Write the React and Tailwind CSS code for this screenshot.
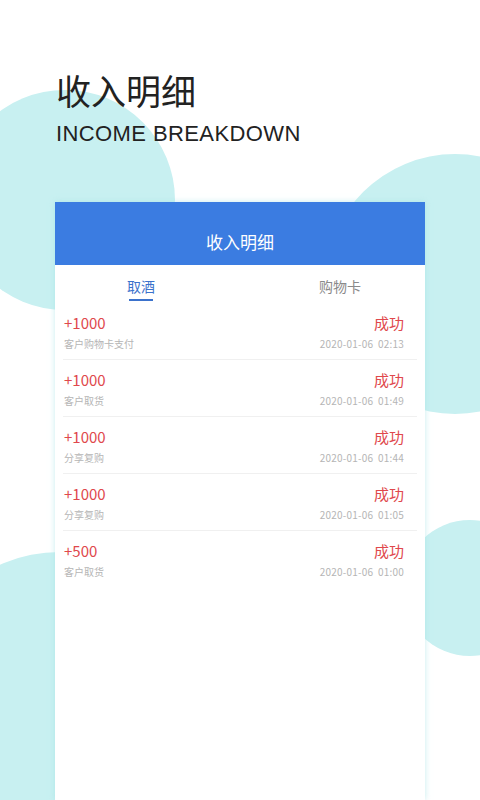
import React from 'react';

const records = [
    { amount: '+1000', note: '客户购物卡支付', time: '2020-01-06  02:13' },
    { amount: '+1000', note: '客户取货', time: '2020-01-06  01:49' },
    { amount: '+1000', note: '分享复购', time: '2020-01-06  01:44' },
    { amount: '+1000', note: '分享复购', time: '2020-01-06  01:05' },
    { amount: '+500', note: '客户取货', time: '2020-01-06  01:00' },
];

const cjk = { fontFamily: '"Noto Sans CJK SC", "Noto Sans", sans-serif' };

export default function App() {
    return (
        <div className="relative h-[800px] w-[480px] overflow-hidden bg-white" style={cjk}>
            {/* background blobs */}
            <div className="absolute left-[-45px] top-[90px] w-[220px] h-[220px] rounded-full bg-[#c8f0f1]" />
            <div className="absolute left-[325px] top-[154px] w-[260px] h-[260px] rounded-full bg-[#c8f0f1]" />
            <div className="absolute left-[402px] top-[520px] w-[136px] h-[136px] rounded-full bg-[#c8f0f1]" />
            <div className="absolute left-[-88px] top-[552px] w-[296px] h-[296px] rounded-full bg-[#c8f0f1]" />

            <div className="relative flex flex-col h-full">
                {/* Heading */}
                <div className="pl-[56px] pt-[66px]">
                    <h1 className="text-[35px] leading-[48px] font-normal text-[#222]">收入明细</h1>
                    <p className="mt-[6px] text-[22px] leading-[28px] text-[#222] tracking-[0.4px]" style={{ fontFamily: '"Liberation Sans", sans-serif' }}>
                        INCOME BREAKDOWN
                    </p>
                </div>

                {/* Card */}
                <div className="mt-[54px] mx-[55px] flex-1 bg-white shadow-[0_0_6px_rgba(160,225,228,0.6)] flex flex-col">
                    <div className="h-[63px] bg-[#3b7ce1] flex items-end justify-center pb-[12px]">
                        <span className="text-[17px] leading-[22px] text-white">收入明细</span>
                    </div>

                    {/* Tabs */}
                    <div className="flex justify-between pl-[72px] pr-[64px] pt-[11px]">
                        <div className="flex flex-col items-center">
                            <span className="text-[14px] leading-[20px] text-[#3b72cc]">取酒</span>
                            <span className="mt-[3px] w-[24px] h-[2px] bg-[#3b72cc]" />
                        </div>
                        <span className="text-[14px] leading-[20px] text-[#8a8a8a]">购物卡</span>
                    </div>

                    {/* List */}
                    <div className="px-[8px] pt-[2px]">
                        {records.map((r, i) => (
                            <div key={i} className={`pl-[1px] pr-[13px] pt-[9px] h-[57px] ${i < records.length - 1 ? 'border-b border-[#f0f0f0]' : ''}`}>
                                <div className="flex justify-between items-center">
                                    <span className="text-[15px] leading-[22px] text-[#e0484c]">{r.amount}</span>
                                    <span className="text-[15px] leading-[22px] text-[#e0484c]">成功</span>
                                </div>
                                <div className="flex justify-between items-center mt-[2px]">
                                    <span className="text-[10px] leading-[16px] text-[#b5b5b5]">{r.note}</span>
                                    <span className="text-[10px] leading-[16px] text-[#b5b5b5] whitespace-pre tracking-[0.2px]">{r.time}</span>
                                </div>
                            </div>
                        ))}
                    </div>
                </div>
            </div>
        </div>
    );
}
